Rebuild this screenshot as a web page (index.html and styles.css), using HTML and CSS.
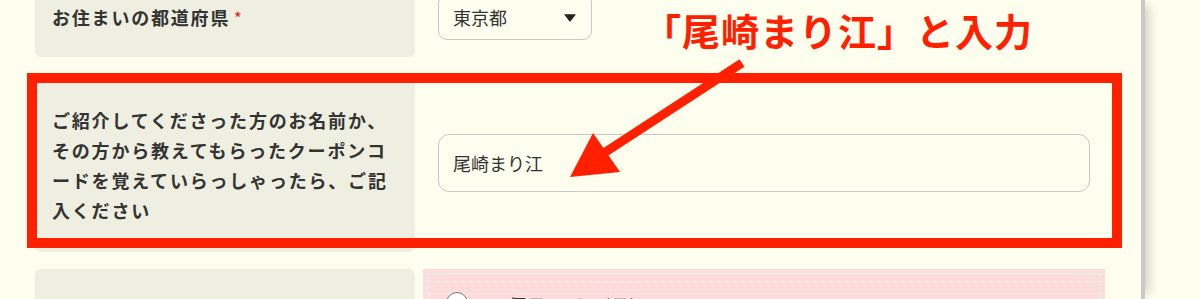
FILE: index.html
```html
<!DOCTYPE html>
<html lang="ja">
<head>
<meta charset="utf-8">
<title>フォーム</title>
<link rel="stylesheet" href="styles.css">
</head>
<body>
<div class="page">
  <form class="form">
    <div class="row row-pref">
      <div class="label"><span>お住まいの都道府県</span><span class="req">*</span></div>
      <div class="field">
        <div class="select-wrap">
          <select class="select"><option>東京都</option></select>
          <svg class="caret" viewBox="0 0 14 9"><path d="M1 1.2 H13 L7.6 8.2 Q7 8.8 6.4 8.2 Z" fill="#222"/></svg>
        </div>
      </div>
    </div>
    <div class="row row-intro">
      <div class="label"><p class="label-text">ご紹介してくださった方のお名前か、<br>その方から教えてもらったクーポンコ<br>ードを覚えていらっしゃったら、ご記<br>入ください</p></div>
      <div class="field">
        <input class="input" type="text" value="尾崎まり江">
      </div>
    </div>
    <div class="row row-date">
      <div class="label"></div>
      <div class="field field-pink">
        <div class="opts">
          <div class="opts-head"></div>
          <label class="opt"><span class="radio"></span><span class="opt-text">1便目 11/10(日) 20:10 〜 22:00</span></label>
        </div>
      </div>
    </div>
  </form>
  <div class="highlight"></div>
  <div class="callout">「尾崎まり江」と入力</div>
  <svg class="arrow" viewBox="0 0 1141 299">
    <line x1="604" y1="153" x2="742" y2="63" stroke="#ff2000" stroke-width="9"/>
    <polygon points="570,177 593,133 620,172" fill="#ff2000"/>
  </svg>
</div>
</body>
</html>
```
FILE: styles.css
```css
body {
  margin: 0;
  background: #fefeee;
  font-family: "Noto Sans CJK JP", "Noto Sans", sans-serif;
  color: #333;
  overflow: hidden;
}

.page {
  position: relative;
  width: 1141px;
  height: 299px;
  border-right: 4px solid #c9c9c9;
  box-shadow: 9px 0 10px -5px rgba(0, 0, 0, 0.18);
  overflow: hidden;
}

.form {
  margin: -23px 0 0 35px;
  width: 1070px;
}

.row {
  display: grid;
  grid-template-columns: 380px 682px;
  column-gap: 8px;
  margin-bottom: 17px;
}

.row-pref { height: 80px; }
.row-intro { height: 178px; }
.row-date { height: 120px; }

.label {
  background: #efefe1;
  border-radius: 6px;
  padding: 0 17px;
  display: flex;
  align-items: center;
  font-size: 18px;
  font-weight: 700;
  letter-spacing: 0.1em;
  line-height: 30px;
  color: #333;
}

.row-intro .label {
  padding-top: 4px;
}

.label-text {
  margin: 0;
  white-space: nowrap;
}

.req {
  color: #e8322c;
  font-size: 14px;
  font-weight: 700;
  margin-left: 4px;
  position: relative;
  top: 0;
}

.field {
  display: flex;
  align-items: center;
  padding: 0 15px;
}

.select-wrap {
  position: relative;
  width: 154px;
  height: 46px;
}

.select {
  appearance: none;
  -webkit-appearance: none;
  width: 100%;
  height: 100%;
  box-sizing: border-box;
  border: 1.5px solid #c8c8c8;
  border-radius: 9px;
  background: transparent;
  font-family: "Noto Sans CJK JP", sans-serif;
  font-size: 18px;
  color: #333;
  padding: 0 0 0 14px;
  margin: 0;
}

.caret {
  position: absolute;
  right: 15px;
  top: 19px;
  width: 14px;
  height: 9px;
}

.input {
  width: 652px;
  height: 58px;
  box-sizing: border-box;
  border: 1.5px solid #c8c8c8;
  border-radius: 11px;
  background: transparent;
  font-family: "Noto Sans CJK JP", sans-serif;
  font-size: 18px;
  color: #333;
  padding: 0 14px;
  margin: 0;
}

.field-pink {
  background: #ffdcdc;
  padding: 4px 4px 0;
  align-items: stretch;
}

.opts {
  flex: 1;
  border: 1px dotted #fff;
  border-bottom: none;
}

.opts-head {
  height: 7px;
  border-bottom: 1px dotted #fff;
}

.opt {
  display: flex;
  align-items: flex-start;
  gap: 29px;
  margin-top: 11px;
  padding-left: 18px;
  border-top: 1px dotted #fff;
  font-size: 18px;
  line-height: 22px;
  color: #333;
}

.radio {
  flex: none;
  width: 22px;
  height: 22px;
  box-sizing: border-box;
  border: 1.5px solid #777;
  border-radius: 50%;
  background: #fff;
  margin-top: -2px;
}

.opt-text {
  letter-spacing: 0.06em;
  margin-top: 0;
}

.highlight {
  position: absolute;
  left: 27px;
  top: 73px;
  width: 1095px;
  height: 175px;
  box-sizing: border-box;
  border: 10px solid #ff2000;
}

.callout {
  position: absolute;
  left: 643px;
  top: 11px;
  font-size: 38px;
  line-height: 38px;
  font-weight: 700;
  letter-spacing: 1px;
  color: #ff2000;
  white-space: nowrap;
}

.arrow {
  position: absolute;
  left: 0;
  top: 0;
  width: 1141px;
  height: 299px;
  pointer-events: none;
}
```
